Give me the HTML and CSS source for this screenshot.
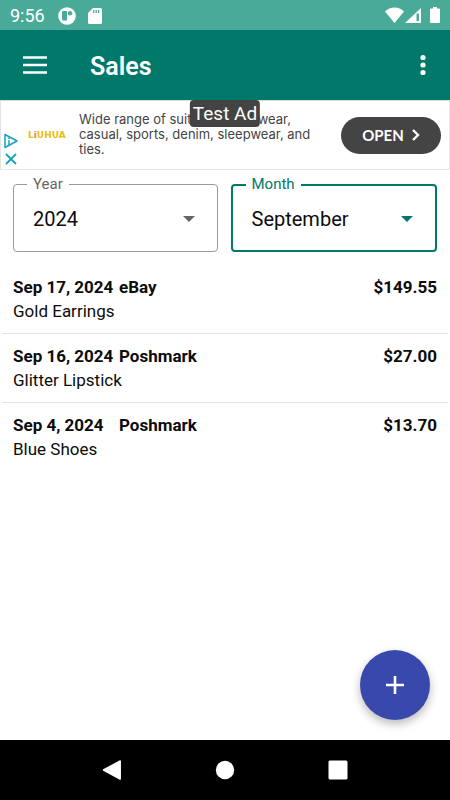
FILE: index.html
```html
<!DOCTYPE html>
<html lang="en">
<head>
<meta charset="utf-8">
<meta name="viewport" content="width=device-width, initial-scale=1">
<title>Sales</title>
<link rel="stylesheet" href="styles.css">
</head>
<body>
<div class="status">
  <span class="clock">9:56</span>
  <svg class="status-app" width="18" height="18" viewBox="0 0 18 18" aria-hidden="true"><circle cx="9" cy="9" r="8.800" fill="#fff"/><path d="M5 4h4v9.500H5.500a1.500 1.500 0 0 1-1.500-1.500V5a1 1 0 0 1 1-1z" fill="#4aaa98"/><circle cx="12" cy="6.200" r="2.200" fill="#4aaa98"/></svg>
  <svg class="status-card" width="14" height="16" viewBox="0 0 14 16" aria-hidden="true"><path d="M5 0h7.500A1.500 1.500 0 0 1 14 1.500v13a1.500 1.500 0 0 1-1.500 1.500h-11A1.500 1.500 0 0 1 0 14.500V5z" fill="#fff"/><path d="M5.700 2v3M8.200 2v3M10.700 2v3" stroke="#4aaa98" stroke-width="1.300"/></svg>
  <svg class="status-system" width="56" height="17" viewBox="0 0 56 17" aria-hidden="true"><path d="M1 4.500C6-1 15-1 20 4.500L10.500 16z" fill="#fff"/><path d="M37 1v15H21z" fill="#fff"/><path d="M32.500 6.500h2.500v7.500h-2.500z" fill="#4aaa98"/><path d="M49 0h4v1.500h2a1 1 0 0 1 1 1V15a1 1 0 0 1-1 1h-8a1 1 0 0 1-1-1V2.500a1 1 0 0 1 1-1h2z" fill="#fff"/></svg>
</div>
<header class="bar">
  <button class="icon-button" type="button" aria-label="Open menu"><svg width="24" height="18" viewBox="0 0 24 18"><path d="M0 1.500h24M0 9h24M0 16.500h24" stroke="#fff" stroke-width="2.600"/></svg></button>
  <h1>Sales</h1>
  <button class="icon-button" type="button" aria-label="More options"><svg width="6" height="22" viewBox="0 0 6 22"><g fill="#fff"><circle cx="3" cy="3.500" r="2.600"/><circle cx="3" cy="11" r="2.600"/><circle cx="3" cy="18.500" r="2.600"/></g></svg></button>
</header>
<aside class="ad">
  <div class="ad-choices">
    <svg width="14" height="16" viewBox="0 0 14 16" aria-hidden="true"><path d="M1 1.500v13L13 8z" fill="none" stroke="#17a2c4" stroke-width="1.500" stroke-linejoin="round"/><path d="M5 4.500v1.500M5 7.200v5" stroke="#17a2c4" stroke-width="1.500"/></svg>
    <button class="ad-close" type="button" aria-label="Close ad"><svg width="12" height="12" viewBox="0 0 12 12"><path d="M1 1l10 10M11 1L1 11" stroke="#17a2c4" stroke-width="1.800"/></svg></button>
  </div>
  <span class="brand">L<span class="brand-i">i</span>UHUA</span>
  <p>Wide range of suits, evening wear, casual, sports, denim, sleepwear, and ties.</p>
  <button class="open" type="button">OPEN <svg width="8" height="12" viewBox="0 0 8 12" aria-hidden="true"><path d="M1 1l5 5-5 5" fill="none" stroke="#fff" stroke-width="2.400"/></svg></button>
  <span class="ad-badge">Test Ad</span>
</aside>
<main>
  <form class="filters">
    <fieldset class="field">
      <legend><label for="year">Year</label></legend>
      <div class="control">
        <select id="year"><option>2024</option></select>
        <svg width="12" height="6" viewBox="0 0 12 6" aria-hidden="true"><path d="M0 0h12L6 6z" fill="currentColor"/></svg>
      </div>
    </fieldset>
    <fieldset class="field active">
      <legend><label for="month">Month</label></legend>
      <div class="control">
        <select id="month"><option>September</option></select>
        <svg width="12" height="6" viewBox="0 0 12 6" aria-hidden="true"><path d="M0 0h12L6 6z" fill="currentColor"/></svg>
      </div>
    </fieldset>
  </form>
  <ul class="sales">
    <li><div class="line"><span class="date">Sep 17, 2024</span><span>eBay</span><span class="amount">$149.55</span></div><div>Gold Earrings</div></li>
    <li><div class="line"><span class="date">Sep 16, 2024</span><span>Poshmark</span><span class="amount">$27.00</span></div><div>Glitter Lipstick</div></li>
    <li><div class="line"><span class="date">Sep 4, 2024</span><span>Poshmark</span><span class="amount">$13.70</span></div><div>Blue Shoes</div></li>
  </ul>
</main>
<button class="fab" type="button" aria-label="Add sale"><svg width="18" height="18" viewBox="0 0 18 18"><path d="M9 0v18M0 9h18" stroke="#fff" stroke-width="2.600"/></svg></button>
<nav class="system-nav" aria-label="System">
  <button type="button" aria-label="Back"><svg width="20" height="20" viewBox="0 0 20 20"><path d="M18.200 1v18L1.500 10z" fill="#fff" stroke="#fff" stroke-width="1.500" stroke-linejoin="round"/></svg></button>
  <button type="button" aria-label="Home"><svg width="20" height="20" viewBox="0 0 20 20"><circle cx="10" cy="10" r="9.200" fill="#fff"/></svg></button>
  <button type="button" aria-label="Recent apps"><svg width="20" height="20" viewBox="0 0 20 20"><rect x="0.500" y="0.500" width="19" height="19" rx="1.500" fill="#fff"/></svg></button>
</nav>
</body>
</html>
```
FILE: styles.css
```css
* {
  box-sizing: border-box;
}

body {
  margin: 0;
  min-height: 100vh;
  display: flex;
  flex-direction: column;
  background: #fff;
  color: #0c0c0c;
  font-family: Roboto, sans-serif;
  font-size: 17px;
  line-height: 24px;
}

button {
  border: 0;
  padding: 0;
  background: none;
  color: inherit;
  font: inherit;
}

svg {
  display: block;
  flex: none;
}

.status {
  display: flex;
  align-items: center;
  height: 30px;
  padding: 1px 10px 0;
  background: #4aaa98;
  color: #fff;
  font-size: 18px;
}

.status-app {
  margin-left: 13px;
}

.status-card {
  margin-left: 12px;
}

.status-system {
  margin-left: auto;
}

.bar {
  display: flex;
  align-items: center;
  height: 70px;
  padding: 0 7px 0 8px;
  background: #00796b;
  color: #fff;
}

.icon-button {
  display: flex;
  align-items: center;
  justify-content: center;
  width: 54px;
  height: 48px;
}

.icon-button:last-child {
  width: 40px;
}

.bar h1 {
  flex: 1;
  margin: 0;
  padding: 3px 0 0 28px;
  font-size: 25px;
  font-weight: 600;
}

.ad {
  position: relative;
  display: flex;
  align-items: center;
  height: 70px;
  padding-right: 8px;
  border: 1px solid #e4e4e4;
  border-top-color: #cfdedc;
  color: #444;
}

.ad-choices {
  display: flex;
  flex-direction: column;
  align-items: center;
  gap: 4px;
  width: 20px;
  padding-top: 28px;
}

.ad-close {
  line-height: 12px;
}

.brand {
  width: 58px;
  padding-left: 7px;
  color: #e8bf10;
  font-family: "DejaVu Sans", sans-serif;
  font-size: 9px;
  font-weight: 700;
}

.brand-i {
  color: #ef7d55;
}

.ad p {
  flex: 1;
  margin: 0;
  padding: 0 12px 2px 0;
  font-family: Inter, sans-serif;
  font-size: 13px;
  line-height: 15px;
}

.open {
  display: flex;
  align-items: center;
  justify-content: center;
  gap: 8px;
  width: 100px;
  height: 37px;
  border-radius: 19px;
  background: #444;
  color: #fff;
  font-family: Lato, sans-serif;
  font-size: 15px;
  font-weight: 700;
}

.ad-badge {
  position: absolute;
  top: -1px;
  left: 50%;
  transform: translateX(-50%);
  padding: 2px 3px 1px;
  border-radius: 4px;
  background: #434343;
  color: #fff;
  font-size: 19px;
  white-space: nowrap;
}

main {
  flex: 1;
}

.filters {
  display: flex;
  gap: 13px;
  padding: 6px 13px 0;
}

.field {
  flex: 1;
  min-width: 0;
  height: 76px;
  margin: 0;
  padding: 0;
  border: 1px solid #999;
  border-radius: 4px;
  color: #666;
}

.field.active {
  border: 2px solid #00796b;
  color: #00796b;
}

.field legend {
  margin-left: 13px;
  padding: 0 6px;
  font-size: 15px;
  line-height: 17px;
}

.control {
  display: flex;
  align-items: center;
  padding-right: 22px;
}

.control select {
  flex: 1;
  min-width: 0;
  height: 52px;
  padding: 0 0 0 19px;
  border: 0;
  outline: 0;
  background: none;
  color: #0c0c0c;
  font: inherit;
  font-size: 20px;
  appearance: none;
}

.sales {
  list-style: none;
  margin: 13px 2px 0;
  padding: 0;
}

.sales li {
  padding: 10px 11px;
}

.sales li + li {
  border-top: 1px solid #e0e0e0;
}

.line {
  display: flex;
  font-weight: 700;
}

.date {
  width: 106px;
}

.amount {
  margin-left: auto;
}

.fab {
  position: fixed;
  right: 20px;
  bottom: 80px;
  display: flex;
  align-items: center;
  justify-content: center;
  width: 70px;
  height: 70px;
  border-radius: 50%;
  background: #3949ab;
  box-shadow: 0 4px 10px rgba(0, 0, 0, 0.28);
}

.system-nav {
  display: flex;
  justify-content: center;
  gap: 53px;
  height: 60px;
  background: #000;
}

.system-nav button {
  display: flex;
  align-items: center;
  justify-content: center;
  width: 60px;
}
```
